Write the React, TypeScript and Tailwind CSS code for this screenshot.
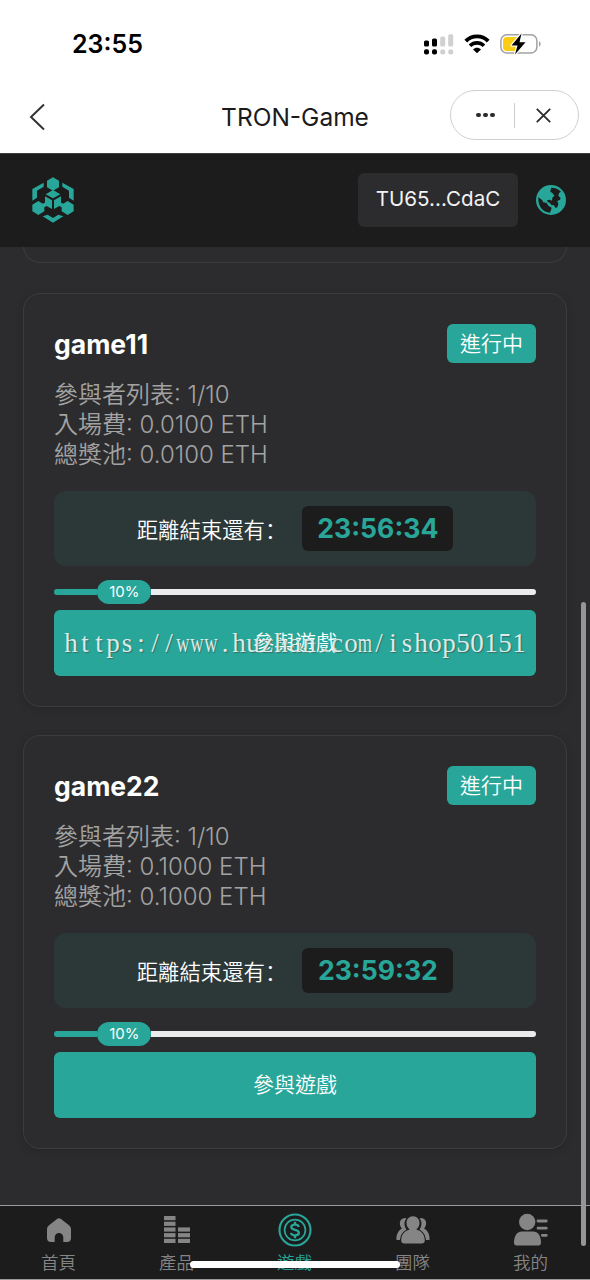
import React from 'react';

const FONT = "font-[Inter,'Noto_Sans_CJK_TC',sans-serif]";

interface Game {
  name: string;
  players: string;
  fee: string;
  pool: string;
  countdown: string;
  progress: number;
  watermark?: string;
}

const games: Game[] = [
  {
    name: 'game11',
    players: '1/10',
    fee: '0.0100 ETH',
    pool: '0.0100 ETH',
    countdown: '23:56:34',
    progress: 10,
    watermark: 'https://www.huzhan.com/ishop50151',
  },
  {
    name: 'game22',
    players: '1/10',
    fee: '0.1000 ETH',
    pool: '0.1000 ETH',
    countdown: '23:59:32',
    progress: 10,
  },
];

const SignalIcon = () => (
  <svg className="w-[30px] h-[21px]" viewBox="0 0 30 21">
    <g fill="#000">
      <rect x="0" y="6.5" width="5" height="6" rx="1.6" />
      <rect x="8" y="4.5" width="5" height="8" rx="1.6" />
      <rect x="0" y="15.2" width="5" height="5.3" rx="2" />
      <rect x="8" y="15.2" width="5" height="5.3" rx="2" />
    </g>
    <g fill="#d0d0d0">
      <rect x="16.2" y="2.5" width="5" height="10" rx="1.6" />
      <rect x="24.2" y="0.3" width="5" height="12.2" rx="1.6" />
      <rect x="16.2" y="15.2" width="5" height="5.3" rx="2.5" />
      <rect x="24.2" y="15.2" width="5" height="5.3" rx="2.5" />
    </g>
  </svg>
);

const WifiIcon = () => (
  <svg className="w-[26px] h-[20px]" viewBox="0 0 26 20" fill="none" stroke="#000">
    <path d="M1.8 7.2C8 .8 18 .8 24.2 7.2" strokeWidth="3.9" />
    <path d="M6 11.7C10 7.9 16 7.9 20 11.7" strokeWidth="3.6" />
    <path d="M13 19.3L9 15.4C11.3 13.3 14.7 13.3 17 15.4Z" fill="#000" stroke="none" />
  </svg>
);

const BatteryIcon = () => (
  <svg className="w-[42px] h-[22px]" viewBox="0 0 42 22">
    <rect x="0.9" y="1.7" width="36" height="18.4" rx="6" fill="#fff" stroke="#a2a2a2" strokeWidth="1.5" />
    <path d="M7 4H17V18H7a4 4 0 0 1-4-4V8a4 4 0 0 1 4-4Z" fill="#fbcd12" />
    <path d="M39 8.200c2.200.8 2.200 4.600 0 5.400Z" fill="#a2a2a2" />
    <path d="M21.500.500L11.500 12.500H17.500L15 21.500L25.500 9.300H19.500Z" fill="#000" stroke="#fff" strokeWidth="2.400" paintOrder="stroke" strokeLinejoin="round" />
  </svg>
);

const Logo = () => (
  <svg className="w-[42px] h-[46px]" viewBox="95 80 126 138" fill="#28a699">
    <path d="M158 81L176 91V111L158 121L140 111V91Z" />
    <path d="M158 119L180 132L158 144L136 132Z" />
    <path d="M114 152L132 163V183L114 194L96 183V163Z" />
    <path d="M202 152L220 163V183L202 194L184 183V163Z" />
    <path d="M134 138L155 150V176L139 167L132 171L126 160L134 157Z" />
    <path d="M182 138L161 150V176L177 167L184 171L190 160L182 157Z" />
    <path d="M96 116L130 97V109L110 121V142L96 151Z" />
    <path d="M220 116L186 97V109L206 121V142L220 151Z" />
    <path d="M127 198L142 193L158 203L174 193L189 198L158 217Z" />
  </svg>
);

const GlobeIcon = () => (
  <svg className="w-[30px] h-[30px]" viewBox="0 0 90 90">
    <circle cx="45" cy="45" r="45" fill="#28a699" />
    <g fill="#1c1c1c">
      <path d="M7 36C12 42 19 43 20 49C22 55 27 52 32 54L37 62L47 68L45 76L42 83C22 82 5 66 7 36Z" />
      <path d="M46 8C60 8 69 13 75 20L69 24L67 32L74 39L72 44L64 48L67 57L64 67L59 69L53 60L47 61L41 53L35 51L33 46L41 44L48 47L49 38L55 32L50 25L43 20L44 14Z" />
    </g>
  </svg>
);

const HomeIcon = () => (
  <svg className="w-[26px] h-[26px]" viewBox="0 0 26 26">
    <path d="M11 2Q13 .6 15 2L23 8.200Q25 9.800 25 12V21Q25 25 21 25H17.300V20.200a4.300 4.300 0 0 0-8.600 0V25H5Q1 25 1 21V12Q1 9.800 3 8.200Z" fill="#858585" />
  </svg>
);

const ProductIcon = () => (
  <svg className="w-[26px] h-[28px]" viewBox="0 0 26 28" fill="#858585">
    {[0, 5.7, 11.4, 17.1, 22.8].map((y) => (
      <rect key={y} x="0" y={y} width="11.5" height="4.2" />
    ))}
    {[11.4, 17.1, 22.8].map((y) => (
      <rect key={y} x="14" y={y} width="12" height="4.2" />
    ))}
  </svg>
);

const GameIcon = () => (
  <svg className="w-[34px] h-[34px]" viewBox="0 0 34 34" fill="none" stroke="#28a699">
    <circle cx="17" cy="17" r="15.5" strokeWidth="2.1" />
    <circle cx="17" cy="17" r="10.4" strokeWidth="1.7" />
    <path d="M20.8 14C20.500 12.300 19 11.600 17 11.600C14.900 11.600 13.300 12.500 13.300 14.100C13.300 17.900 20.900 16 20.900 19.800C20.900 21.500 19.200 22.400 17 22.400C14.800 22.400 13.300 21.600 13 19.900" strokeWidth="2.300" />
    <path d="M17 8.800V12M17 22V25.200" strokeWidth="2.300" />
  </svg>
);

const TeamIcon = () => (
  <svg className="w-[34px] h-[28px]" viewBox="0 0 34 28" fill="#858585">
    <path d="M8.500 2C2 3 3.500 10.500 6 12.500C2 14.500 0 19 .500 24H4C4.500 19.500 6 16.500 10.500 13.500C8 10 7.600 5.500 10.500 2.500Z" />
    <path d="M25.500 2C32 3 30.500 10.500 28 12.500C32 14.500 34 19 33.500 24H30C29.500 19.500 28 16.500 23.500 13.500C26 10 26.400 5.500 23.500 2.500Z" />
    <path
      d="M17 .3c4 0 6.500 3 6.500 6.500 0 3-1.200 5.400-3.300 6.600C26 14.800 28.800 19 28.800 24.500Q28.800 27.500 25.500 27.500H8.500Q5.200 27.500 5.200 24.500C5.200 19 8 14.800 13.800 13.400 11.700 12.200 10.500 9.800 10.500 6.800 10.500 3.300 13 .3 17 .3Z"
      stroke="#1c1c1c"
      strokeWidth="1"
      paintOrder="stroke"
    />
  </svg>
);

const MineIcon = () => (
  <svg className="w-[34px] h-[34px]" viewBox="0 0 34 34" fill="#858585">
    <circle cx="13.2" cy="9" r="8.2" />
    <path d="M8 18.500H19C24 18.500 27 23 27 29.500Q27 32.500 24.500 32.500H2.500Q0 32.500 0 29.500C0 23 3 18.500 8 18.500Z" />
    <g stroke="#858585" strokeWidth="2.8" strokeLinecap="round">
      <path d="M24 8H32.300M24 15.200H32.300M28.300 22.300H32.300" />
    </g>
  </svg>
);

const tabs = [
  { label: '首頁', icon: <HomeIcon /> },
  { label: '產品', icon: <ProductIcon /> },
  { label: '遊戲', icon: <GameIcon />, active: true },
  { label: '團隊', icon: <TeamIcon /> },
  { label: '我的', icon: <MineIcon /> },
];

const StatusBar: React.FC = () => (
  <div className="h-[88px] shrink-0 flex items-center justify-between pl-[72px] pr-[48px] text-black">
    <span className="text-[25px] font-semibold leading-none">23:55</span>
    <div className="flex items-center gap-[10px]">
      <SignalIcon />
      <WifiIcon />
      <BatteryIcon />
    </div>
  </div>
);

const TitleBar: React.FC = () => (
  <div className="h-[65px] shrink-0 grid grid-cols-[140px_1fr_140px] items-start text-[#1b1b1b]">
    <svg className="w-[16px] h-[28px] ml-[29px] mt-[15px]" viewBox="0 0 16 28" fill="none" stroke="#333" strokeWidth="2">
      <path d="M15 1.500L2 14L15 26.500" />
    </svg>
    <h1 className="mt-[13px] text-center text-[24.5px] leading-8">TRON-Game</h1>
    <div className="mt-[2px] w-[129px] h-[50px] rounded-full border-[1.5px] border-[#d0d0d0] flex items-center">
      <div className="flex-1 flex justify-center gap-[2.5px] pl-1.5">
        <span className="w-[4.5px] h-[4.5px] rounded-full bg-[#2b2b2b]" />
        <span className="w-[4.5px] h-[4.5px] rounded-full bg-[#2b2b2b]" />
        <span className="w-[4.5px] h-[4.5px] rounded-full bg-[#2b2b2b]" />
      </div>
      <span className="w-px h-[25px] bg-[#cfcfcf]" />
      <div className="flex-1 flex justify-center pr-1.5">
        <svg className="w-[15px] h-[15px]" viewBox="0 0 15 15" stroke="#2b2b2b" strokeWidth="1.8">
          <path d="M.8 .8L14.200 14.200M14.200 .8L.8 14.200" />
        </svg>
      </div>
    </div>
  </div>
);

const Header: React.FC = () => (
  <header className="h-[94px] shrink-0 bg-[#1c1c1c] border-t border-[#3c3c3c] flex items-center justify-between pl-[32px] pr-[24px] pb-0.5">
    <Logo />
    <div className="flex items-center gap-[18px]">
      <div className="w-[160px] h-[54px] rounded-md bg-[#2c2c2e] flex items-center justify-center text-[20.6px] text-[#f2f2f2]">
        TU65...CdaC
      </div>
      <GlobeIcon />
    </div>
  </header>
);

// wide letters are squeezed so that every letter fits its 14px cell
const Watermark: React.FC<{ text: string }> = ({ text }) => (
  <span className="absolute inset-0 flex items-center justify-center font-['Liberation_Serif',serif] font-normal text-[27px] text-[#dcebe8] [text-shadow:1px_1px_1px_rgba(70,70,70,0.6)]">
    <span className="whitespace-nowrap">
      {text.split('').map((char, i) => (
        <span
          key={i}
          className={`inline-flex w-[14px] justify-center ${char === 'w' || char === 'm' ? 'scale-x-[0.68]' : ''}`}
        >
          {char}
        </span>
      ))}
    </span>
  </span>
);

const GameCard: React.FC<{ game: Game }> = ({ game }) => (
  <section className="h-[414px] rounded-[17px] border-[1.5px] border-[#3c3c3e] shadow-[0_2px_8px_rgba(0,0,0,0.15)] px-[30px] pt-[30px]">
    <div className="h-[39px] flex items-center justify-between">
      <h2 className="pt-0.5 text-[26.5px] font-bold text-white">{game.name}</h2>
      <span className="w-[89px] h-[39px] rounded-md bg-[#28a699] flex items-center justify-center text-[21px] text-white font-[350] pt-px">
        進行中
      </span>
    </div>

    <div className="mt-[17px] text-[24px] leading-[30px] text-[#a3a3a3] font-[350]">
      <p className="h-[30px]">參與者列表: {game.players}</p>
      <p className="h-[30px]">入場費: {game.fee}</p>
      <p className="h-[30px]">總獎池: {game.pool}</p>
    </div>

    <div className="mt-[21px] h-[75px] rounded-xl bg-[#2c3838] flex items-center justify-center gap-[16px]">
      <span className="pt-px text-[21.4px] text-white font-[350] font-['Noto_Sans_CJK_SC',sans-serif]">距離結束還有：</span>
      <span className="w-[151px] h-[45px] rounded-md bg-[#1c1c1c] flex items-center justify-center text-[26.6px] font-bold text-[#28a699]">
        {game.countdown}
      </span>
    </div>

    <div className="mt-[14px] h-[24px] flex items-center">
      <div className="h-[6px] rounded-l-full bg-[#28a699]" style={{ width: `${game.progress - 1}%` }} />
      <span className="w-[54px] h-[24px] rounded-full bg-[#28a699] flex items-center justify-center text-[15px] text-white">
        {game.progress}%
      </span>
      <div className="flex-1 h-[6px] rounded-r-full bg-[#ebebeb]" />
    </div>

    <button className="relative mt-[6px] w-full h-[66px] rounded-md bg-[#28a699] text-[21px] text-white font-[350] block">
      參與遊戲
      {game.watermark && <Watermark text={game.watermark} />}
    </button>
  </section>
);

const TabBar: React.FC = () => (
  <nav className="relative h-[75px] shrink-0 bg-[#1c1c1c] border-t border-t-[#9a9a9a] border-b border-b-[#9a9a9a] grid grid-cols-5">
    {tabs.map((tab) => (
      <div key={tab.label} className="flex flex-col items-center pt-[6px] pr-px">
        <div className="h-[36px] flex items-center justify-center">{tab.icon}</div>
        <span className={`mt-[3px] text-[17.5px] leading-6 font-[350] ${tab.active ? 'text-[#28a699]' : 'text-[#858585]'}`}>
          {tab.label}
        </span>
      </div>
    ))}
    <div className="absolute left-[190px] top-[55px] w-[210px] h-[7px] rounded-full bg-white" />
  </nav>
);

export default function App() {
  return (
    <div className={`relative w-[590px] h-[1280px] overflow-hidden bg-white flex flex-col ${FONT}`}>
      <StatusBar />
      <TitleBar />
      <Header />
      <main className="flex-1 min-h-0 overflow-hidden bg-[#2c2c2e] px-[23px]">
        <div className="h-[16px] flex items-end overflow-hidden">
          <div className="w-full h-[40px] shrink-0 rounded-b-[17px] border-[1.5px] border-t-0 border-[#3c3c3e]" />
        </div>
        <div className="mt-[30px] flex flex-col gap-[28px]">
          {games.map((game) => (
            <GameCard key={game.name} game={game} />
          ))}
        </div>
      </main>
      <TabBar />
      {/* scroll indicator */}
      <div className="absolute left-[581px] top-[602px] w-[5px] h-[644px] rounded-full bg-[#969696]" />
    </div>
  );
}
